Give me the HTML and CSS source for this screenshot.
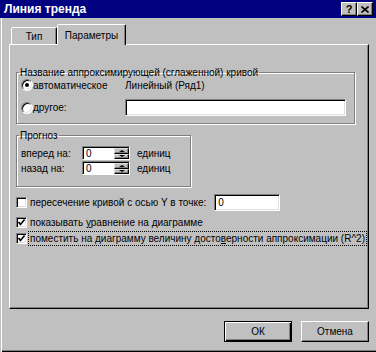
FILE: index.html
```html
<!DOCTYPE html>
<html lang="ru">
<head>
    <meta charset="UTF-8">
    <title>Линия тренда</title>
    <link rel="stylesheet" href="styles.css">
</head>
<body>
    <div class="window">
        <div class="titlebar">
            <span class="title">Линия тренда</span>
            <div class="caption-buttons">
                <span class="cap-btn">?</span>
                <span class="cap-btn">
                    <svg width="8" height="7" viewBox="0 0 8 7"><path d="M0.5 0.5 L7.5 6.5 M7.5 0.5 L0.5 6.5" stroke="#000" stroke-width="1.6"/></svg>
                </span>
            </div>
        </div>

        <div class="client">
            <div class="tabs">
                <div class="tab">Тип</div>
                <div class="tab active">Параметры</div>
            </div>

            <div class="panel">
                <fieldset class="group name-group">
                    <legend>Название аппроксимирующей (сглаженной) кривой</legend>
                    <div class="radio-row">
                        <label class="radio-label"><span class="radio checked"></span>автоматическое</label>
                        <span>Линейный (Ряд1)</span>
                    </div>
                    <div class="radio-row edit-row">
                        <label class="radio-label"><span class="radio"></span><span><u>д</u>ругое:</span></label>
                        <span class="edit name-edit"></span>
                    </div>
                </fieldset>

                <fieldset class="group forecast">
                    <legend>Прогноз</legend>
                    <div class="spin-row first">
                        <span class="spin-label">вперед на:</span>
                        <div class="spin">
                            <span class="spin-value">0</span>
                            <span class="spin-buttons">
                                <span class="spin-btn"><i class="arrow up"></i></span>
                                <span class="spin-btn"><i class="arrow down"></i></span>
                            </span>
                        </div>
                        <span class="units">единиц</span>
                    </div>
                    <div class="spin-row">
                        <span class="spin-label">назад на:</span>
                        <div class="spin">
                            <span class="spin-value">0</span>
                            <span class="spin-buttons">
                                <span class="spin-btn"><i class="arrow up"></i></span>
                                <span class="spin-btn"><i class="arrow down"></i></span>
                            </span>
                        </div>
                        <span class="units">единиц</span>
                    </div>
                </fieldset>

                <div class="check-row intercept">
                    <span class="checkbox"></span>
                    <span class="check-text">пересечение кривой с осью Y в точке:</span>
                    <span class="edit intercept-edit">0</span>
                </div>
                <div class="check-row">
                    <span class="checkbox checked">
                        <svg width="9" height="9" viewBox="0 0 9 9"><path d="M1.5 4 L3.5 6.5 L7.5 1.5" fill="none" stroke="#000" stroke-width="1.7"/></svg>
                    </span>
                    <span class="check-text">показывать <u>у</u>равнение на диаграмме</span>
                </div>
                <div class="check-row last">
                    <span class="checkbox checked">
                        <svg width="9" height="9" viewBox="0 0 9 9"><path d="M1.5 4 L3.5 6.5 L7.5 1.5" fill="none" stroke="#000" stroke-width="1.7"/></svg>
                    </span>
                    <span class="check-text focus">поместить на диаграмму величину досто<u>в</u>ерности аппроксимации (R^2)</span>
                </div>
            </div>

            <div class="buttons">
                <span class="btn default">ОК</span>
                <span class="btn">Отмена</span>
            </div>
        </div>
    </div>
</body>
</html>
```

FILE: styles.css
```css
body {
    margin: 0;
    font-family: "Liberation Sans", Arial, sans-serif;
    font-size: 10px;
    color: #000;
    background: #c0c0c0;
    white-space: nowrap;
}
.window {
    width: 376px;
    height: 352px;
    display: flex;
    flex-direction: column;
    background: #c0c0c0;
}
.titlebar {
    height: 18px;
    flex: none;
    background: #000080;
    color: #fff;
    display: flex;
    align-items: center;
    justify-content: space-between;
    padding: 0 3px 0 4px;
}
.title {
    font-weight: bold;
    font-size: 12px;
}
.caption-buttons {
    display: flex;
    gap: 0;
}
.cap-btn {
    width: 16px;
    height: 14px;
    box-sizing: border-box;
    background: #c0c0c0;
    color: #000;
    border: 1px solid;
    border-color: #fff #000 #000 #fff;
    box-shadow: inset -1px -1px #808080;
    display: flex;
    align-items: center;
    justify-content: center;
    font-weight: bold;
    font-size: 11px;
}
.client {
    flex: 1;
    display: flex;
    flex-direction: column;
    padding: 6px 7px 0 9px;
    box-shadow: inset 1px 0 #c0c0c0, inset 2px 0 #fff, inset 0 -1px #000, inset 0 -2px #808080;
}
.tabs {
    display: flex;
    align-items: flex-end;
    height: 20px;
    padding-left: 2px;
}
.tab {
    width: 46px;
    height: 17px;
    box-sizing: border-box;
    border: 1px solid;
    border-bottom: none;
    border-color: #fff #000 transparent #fff;
    border-radius: 2px 2px 0 0;
    box-shadow: inset -1px 0 #808080;
    display: flex;
    align-items: center;
    justify-content: center;
    background: #c0c0c0;
}
.tab.active {
    width: 69px;
    height: 21px;
    margin-bottom: -1px;
    position: relative;
    z-index: 1;
}
.panel {
    height: 265px;
    box-sizing: border-box;
    border: 1px solid;
    border-color: #fff #000 #000 #fff;
    box-shadow: inset -1px -1px #808080;
    padding: 21px 0 0 6px;
}
.group {
    margin: 0;
    padding: 0;
    box-sizing: border-box;
    border: 1px solid #808080;
    box-shadow: 1px 1px #fff, inset 1px 1px #fff;
}
.group legend {
    margin-left: 2px;
    padding: 0 1px;
    line-height: 13px;
}
.name-group {
    width: 339px;
    height: 58px;
}
.radio-row {
    display: flex;
    align-items: center;
    height: 12px;
    margin-left: 4px;
}
.radio-row.edit-row {
    height: 17px;
    margin-top: 8px;
}
.radio-label {
    width: 104px;
    display: flex;
    align-items: center;
}
.radio {
    width: 12px;
    height: 12px;
    box-sizing: border-box;
    border-radius: 50%;
    border: 1px solid;
    border-color: #808080 #fff #fff #808080;
    box-shadow: inset 1px 1px #000, inset -1px -1px #dfdfdf;
    background: #fff;
    display: flex;
    align-items: center;
    justify-content: center;
}
.radio.checked::after {
    content: "";
    width: 4px;
    height: 4px;
    border-radius: 50%;
    background: #000;
}
.edit {
    background: #fff;
    box-sizing: border-box;
    height: 17px;
    border: 1px solid;
    border-color: #808080 #fff #fff #808080;
    box-shadow: inset 1px 1px #000, inset -1px -1px #dfdfdf;
    display: flex;
    align-items: center;
    padding-left: 3px;
}
.name-edit {
    width: 221px;
}
.forecast {
    width: 175px;
    height: 58px;
    margin-top: 5px;
}
.spin-row {
    display: flex;
    align-items: center;
    height: 14px;
    margin: 1px 0 0 4px;
}
.spin-row.first {
    margin-top: 4px;
}
.spin-label {
    width: 61px;
}
.spin {
    width: 48px;
    height: 14px;
    box-sizing: border-box;
    display: flex;
    background: #fff;
    border: 1px solid;
    border-color: #808080 #fff #fff #808080;
    box-shadow: inset 1px 1px #000;
}
.spin-value {
    flex: 1;
    padding: 1px 0 0 3px;
    line-height: 11px;
}
.spin-buttons {
    width: 15px;
    display: flex;
    flex-direction: column;
    padding: 1px 0 0 0;
}
.spin-btn {
    flex: 1;
    background: #c0c0c0;
    border: 1px solid;
    border-color: #dfdfdf #000 #000 #dfdfdf;
    box-shadow: inset -1px -1px #808080;
    display: flex;
    align-items: center;
    justify-content: center;
}
.arrow {
    width: 0;
    height: 0;
    border-left: 3px solid transparent;
    border-right: 3px solid transparent;
}
.arrow.up {
    border-bottom: 2px solid #000;
}
.arrow.down {
    border-top: 2px solid #000;
}
.units {
    margin-left: 7px;
}
.check-row {
    display: flex;
    align-items: center;
    height: 12px;
    margin-top: 5px;
}
.check-row.intercept {
    height: 17px;
    margin-top: 7px;
}
.check-row.last {
    height: 14px;
    margin-top: 3px;
}
.checkbox {
    width: 11px;
    height: 11px;
    flex: none;
    box-sizing: border-box;
    background: #fff;
    border: 1px solid;
    border-color: #808080 #fff #fff #808080;
    box-shadow: inset 1px 1px #000, inset -1px -1px #dfdfdf;
    display: flex;
    align-items: center;
    justify-content: center;
}
.check-text {
    margin-left: 3px;
}
.check-text.focus {
    margin-left: 2px;
    padding: 0 1px;
    outline: 1px dotted #000;
    line-height: 13px;
}
.intercept-edit {
    width: 66px;
    margin-left: 8px;
}
.buttons {
    display: flex;
    justify-content: flex-end;
    gap: 9px;
    margin-top: 12px;
}
.btn {
    width: 68px;
    height: 21px;
    box-sizing: border-box;
    border: 1px solid;
    border-color: #fff #000 #000 #fff;
    box-shadow: inset -1px -1px #808080;
    display: flex;
    align-items: center;
    justify-content: center;
}
.btn.default {
    border-color: #000;
    box-shadow: inset 1px 1px #fff, inset -1px -1px #000, inset -2px -2px #808080;
}
```
